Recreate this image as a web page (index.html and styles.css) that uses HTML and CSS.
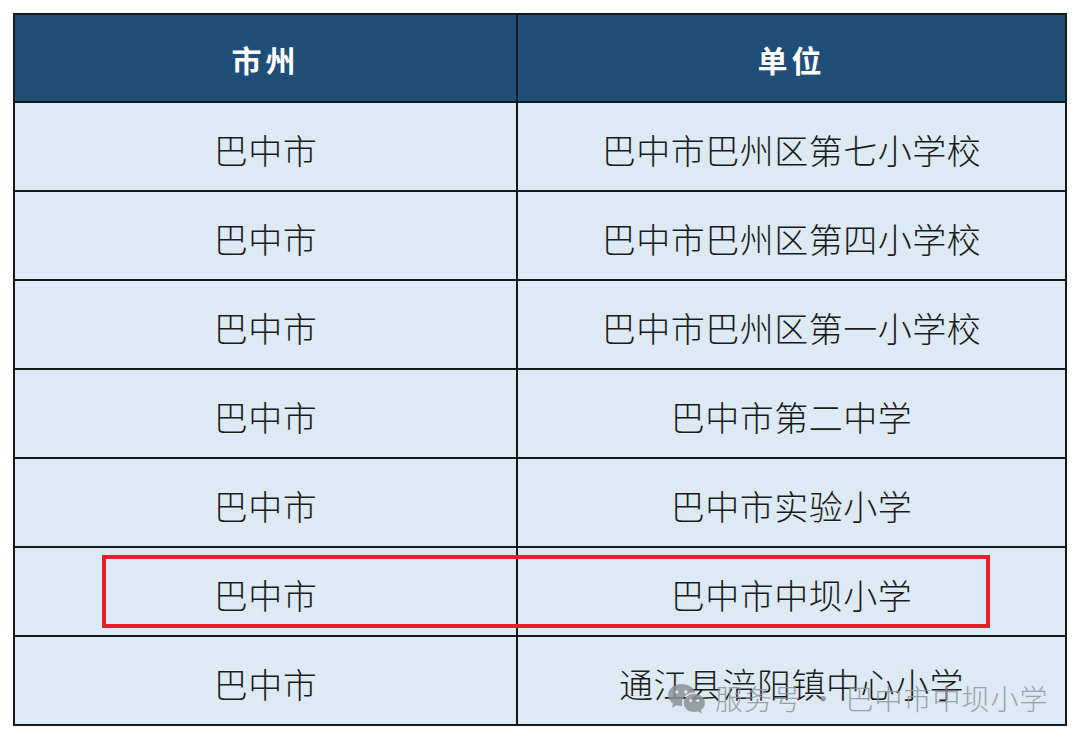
FILE: index.html
```html
<!DOCTYPE html>
<html lang="zh-CN">
<head>
<meta charset="utf-8">
<title>名单</title>
<link rel="stylesheet" href="styles.css">
</head>
<body>
<div class="page">
  <div class="table">
    <div class="cell head">市州</div>
    <div class="cell head">单位</div>
    <div class="cell">巴中市</div>
    <div class="cell">巴中市巴州区第七小学校</div>
    <div class="cell">巴中市</div>
    <div class="cell">巴中市巴州区第四小学校</div>
    <div class="cell">巴中市</div>
    <div class="cell">巴中市巴州区第一小学校</div>
    <div class="cell">巴中市</div>
    <div class="cell">巴中市第二中学</div>
    <div class="cell">巴中市</div>
    <div class="cell">巴中市实验小学</div>
    <div class="cell">巴中市</div>
    <div class="cell">巴中市中坝小学</div>
    <div class="cell">巴中市</div>
    <div class="cell">通江县涪阳镇中心小学</div>
  </div>
  <div class="highlight"></div>
  <div class="watermark">
    <svg class="wx" viewBox="0 0 40 34" width="38" height="32" aria-hidden="true">
      <path d="M15 2C7.3 2 1 7.3 1 13.8c0 3.7 2 7 5.2 9.1L5 27.5l5.1-2.7c1.5.4 3.1.7 4.9.7.4 0 .8 0 1.2 0-.3-1-.5-2-.5-3.1 0-6.3 5.9-11.3 13.2-11.3h1C28.6 5.9 22.4 2 15 2z" fill="#8e9296"/>
      <circle cx="10.2" cy="10.6" r="1.8" fill="#e2ebf4"/>
      <circle cx="19.8" cy="10.6" r="1.8" fill="#e2ebf4"/>
      <path d="M28.8 12.6c-6.2 0-11.3 4.3-11.3 9.6s5.1 9.6 11.3 9.6c1.4 0 2.7-.2 3.9-.6l4.3 2.3-1.1-3.8c2.6-1.8 4.2-4.5 4.2-7.5 0-5.3-5.1-9.6-11.3-9.6z" fill="#8e9296"/>
      <circle cx="25" cy="19.8" r="1.5" fill="#e2ebf4"/>
      <circle cx="32.6" cy="19.8" r="1.5" fill="#e2ebf4"/>
    </svg>
    <span class="wm-text">服务号 · 巴中市中坝小学</span>
  </div>
</div>
</body>
</html>
```

FILE: styles.css
```css
html, body {
  margin: 0;
  padding: 0;
  background: #ffffff;
}

.page {
  position: relative;
  width: 1080px;
  height: 739px;
  padding: 13px 0 0 13px;
  box-sizing: border-box;
}

.table {
  display: grid;
  grid-template-columns: 501px 547px;
  grid-template-rows: 86px repeat(7, 87px);
  gap: 2px;
  padding: 2px;
  width: max-content;
  background: #16191c;
}

.cell {
  display: flex;
  align-items: center;
  justify-content: center;
  background: #dde9f5;
  color: #1a1a1a;
  font-family: "Noto Sans CJK SC", "Noto Sans", sans-serif;
  font-weight: 300;
  font-size: 34px;
  letter-spacing: 0.5px;
  padding-top: 6px;
  box-sizing: border-box;
}

.cell.head {
  background: #1f4e79;
  color: #ffffff;
  font-weight: 700;
  font-size: 30px;
  letter-spacing: 4px;
  padding-top: 2px;
}

.highlight {
  position: absolute;
  left: 102px;
  top: 555px;
  width: 888px;
  height: 73px;
  border: 4px solid #e61e2a;
  box-sizing: border-box;
}

.watermark {
  position: absolute;
  left: 667px;
  top: 678px;
  display: flex;
  align-items: center;
  gap: 10px;
  opacity: 0.85;
}

.wx {
  display: block;
}

.wm-text {
  font-family: "Noto Sans CJK SC", "Noto Sans", sans-serif;
  font-weight: 300;
  font-size: 28px;
  color: #8f949a;
  letter-spacing: 1px;
  white-space: nowrap;
}
```
